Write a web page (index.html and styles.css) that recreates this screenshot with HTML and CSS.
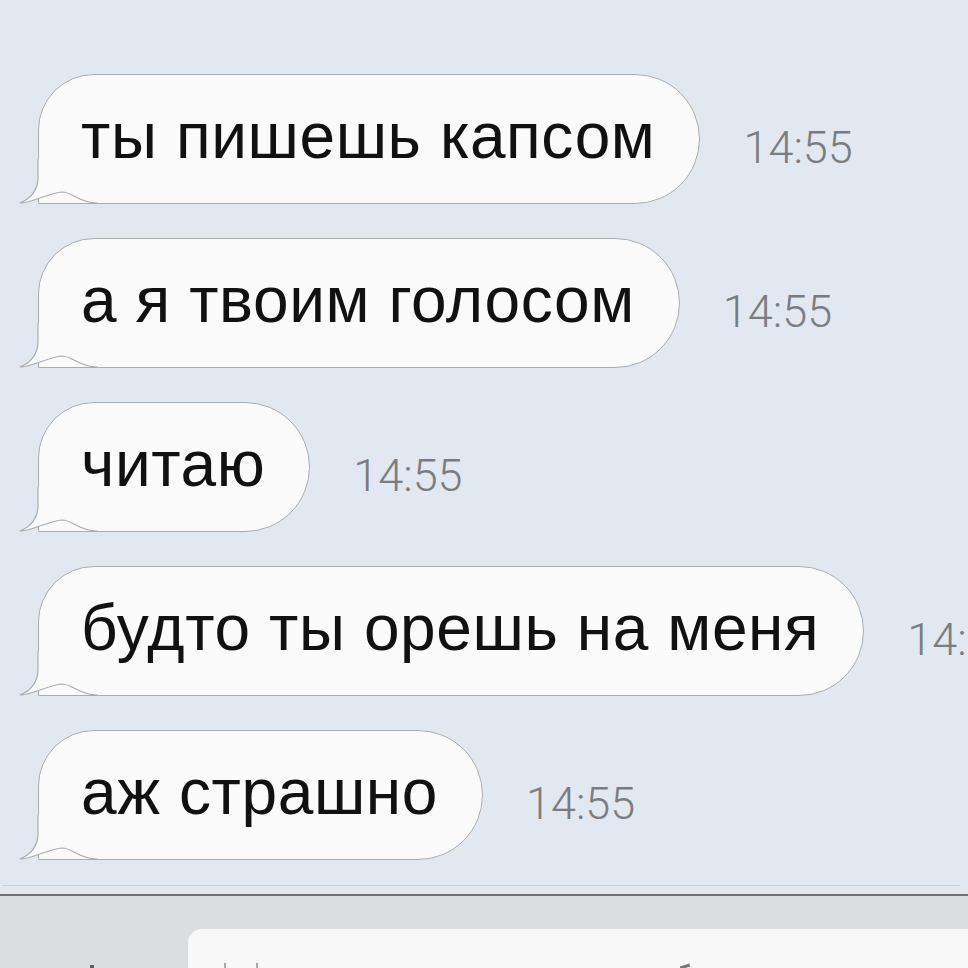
FILE: index.html
```
<!DOCTYPE html>
<html lang="ru">
<head>
    <meta charset="UTF-8">
    <meta name="viewport" content="width=device-width, initial-scale=1.0">
    <title>Сообщения</title>
    <link rel="stylesheet" href="styles.css">
</head>
<body>
    <div class="chat">
        <div class="message">
            <div class="bubble">
                <svg class="tail" viewBox="0 0 80 45" width="80" height="45"><path class="tail-fill" d="M20,0 L20,18 C20,30 14,39 2,44 C14,44 30,34 44,33 C54,33 62,44 78,44 L80,44 L80,0 Z"/><path class="tail-line" d="M20,0 L20,18 C20,30 14,39 2,44 C14,44 30,34 44,33 C54,33 62,44 78,44 L80,44"/></svg>
                <span class="text">ты пишешь капсом</span>
            </div>
            <span class="time">14:55</span>
        </div>
        <div class="message">
            <div class="bubble">
                <svg class="tail" viewBox="0 0 80 45" width="80" height="45"><path class="tail-fill" d="M20,0 L20,18 C20,30 14,39 2,44 C14,44 30,34 44,33 C54,33 62,44 78,44 L80,44 L80,0 Z"/><path class="tail-line" d="M20,0 L20,18 C20,30 14,39 2,44 C14,44 30,34 44,33 C54,33 62,44 78,44 L80,44"/></svg>
                <span class="text">а я твоим голосом</span>
            </div>
            <span class="time">14:55</span>
        </div>
        <div class="message">
            <div class="bubble">
                <svg class="tail" viewBox="0 0 80 45" width="80" height="45"><path class="tail-fill" d="M20,0 L20,18 C20,30 14,39 2,44 C14,44 30,34 44,33 C54,33 62,44 78,44 L80,44 L80,0 Z"/><path class="tail-line" d="M20,0 L20,18 C20,30 14,39 2,44 C14,44 30,34 44,33 C54,33 62,44 78,44 L80,44"/></svg>
                <span class="text">читаю</span>
            </div>
            <span class="time">14:55</span>
        </div>
        <div class="message">
            <div class="bubble">
                <svg class="tail" viewBox="0 0 80 45" width="80" height="45"><path class="tail-fill" d="M20,0 L20,18 C20,30 14,39 2,44 C14,44 30,34 44,33 C54,33 62,44 78,44 L80,44 L80,0 Z"/><path class="tail-line" d="M20,0 L20,18 C20,30 14,39 2,44 C14,44 30,34 44,33 C54,33 62,44 78,44 L80,44"/></svg>
                <span class="text">будто ты орешь на меня</span>
            </div>
            <span class="time">14:55</span>
        </div>
        <div class="message">
            <div class="bubble">
                <svg class="tail" viewBox="0 0 80 45" width="80" height="45"><path class="tail-fill" d="M20,0 L20,18 C20,30 14,39 2,44 C14,44 30,34 44,33 C54,33 62,44 78,44 L80,44 L80,0 Z"/><path class="tail-line" d="M20,0 L20,18 C20,30 14,39 2,44 C14,44 30,34 44,33 C54,33 62,44 78,44 L80,44"/></svg>
                <span class="text">аж страшно</span>
            </div>
            <span class="time">14:55</span>
        </div>
    </div>

    <div class="compose">
        <div class="compose-line"></div>
        <div class="compose-bar">
            <div class="compose-side"><span class="cursor"></span></div>
            <div class="compose-input">
                <span class="mark mark-a"></span>
                <span class="mark mark-b"></span>
                <span class="mark mark-c"></span>
            </div>
        </div>
    </div>
</body>
</html>
```

FILE: styles.css
```
html, body {
    height: 968px;
    overflow: hidden;
}
body {
    margin: 0;
    background-color: #e2e8ef;
    font-family: "Liberation Sans", Arial, sans-serif;
}

.chat {
    display: flex;
    flex-direction: column;
    gap: 34px;
    padding: 74px 0 0 38px;
}

.message {
    display: flex;
    align-items: center;
    gap: 43px;
}

.bubble {
    position: relative;
    flex-shrink: 0;
    height: 128px;
    line-height: 122px;
    padding: 0 44px 0 42px;
    background-color: #fafafa;
    border: 1px solid #a9acb0;
    border-radius: 56px 65px 65px 0;
    font-size: 64px;
    letter-spacing: 0.6px;
    color: #111;
    white-space: nowrap;
}
.text {
    position: relative;
}

.tail {
    position: absolute;
    left: -21px;
    bottom: -1px;
    display: block;
}
.tail-fill {
    fill: #fafafa;
}
.tail-line {
    fill: none;
    stroke: #a9acb0;
    stroke-width: 1.2;
}

.time {
    flex-shrink: 0;
    margin-top: 16px;
    font-family: Roboto, "Liberation Sans", sans-serif;
    font-weight: 300;
    font-size: 45px;
    color: #7a7d80;
    white-space: nowrap;
}

.compose {
    margin-top: 25px;
}
.compose-line {
    height: 8px;
    margin: 0 8px 0 3px;
    border-top: 1px solid #c9d0d9;
}
.compose-bar {
    display: flex;
    height: 72px;
    padding-top: 33px;
    background-color: #dcdddf;
    border-top: 2px solid #6d6f72;
}
.compose-side {
    width: 188px;
    position: relative;
}
.cursor {
    position: absolute;
    left: 90px;
    top: 36px;
    width: 4px;
    height: 10px;
    background-color: #5e5e5e;
}
.compose-input {
    position: relative;
    flex: 1;
    background-color: #f8f8f8;
    border-top-left-radius: 14px;
}
.mark {
    position: absolute;
    top: 34px;
    width: 2px;
    height: 8px;
    background-color: #a8a8a8;
}
.mark-a {
    left: 36px;
}
.mark-b {
    left: 68px;
}
.mark-c {
    left: 492px;
    top: 36px;
    width: 10px;
    height: 3px;
    background-color: #777;
    transform: rotate(-18deg);
}
```
